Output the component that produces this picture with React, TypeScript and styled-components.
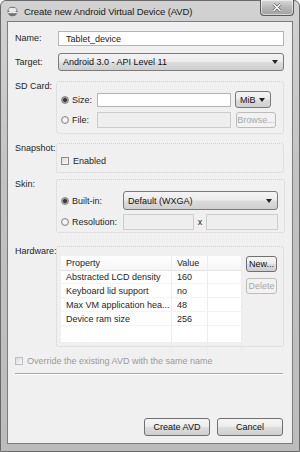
import React from 'react';
import styled, {createGlobalStyle} from 'styled-components';

const GlobalStyle = createGlobalStyle`
  html, body {
    margin: 0;
    padding: 0;
    background: #ffffff;
  }
  * {
    box-sizing: border-box;
  }
`;

const FONT = `"Liberation Sans", "DejaVu Sans", sans-serif`;

const HARDWARE_ROWS = [
  {property: 'Abstracted LCD density', value: '160'},
  {property: 'Keyboard lid support', value: 'no'},
  {property: 'Max VM application hea...', value: '48'},
  {property: 'Device ram size', value: '256'},
];

/* ---------- window frame ---------- */

const Window = styled.div`
  width: 300px;
  height: 452px;
  display: flex;
  flex-direction: column;
  padding: 0 6px 7px 6px;
  border: 1px solid #6a6a6a;
  border-radius: 6px 6px 0 0;
  background: linear-gradient(180deg, #d2d2d2 0%, #c2c2c2 40%, #bcbcbc 100%);
  font-family: ${FONT};
  font-size: 9px;
  color: #1e1e1e;
`;

const TitleBar = styled.div`
  height: 20px;
  display: flex;
  align-items: center;
  gap: 6px;
  padding-left: 0;
  position: relative;
`;

const TitleText = styled.span`
  font-size: 9.5px;
  color: #202020;
  letter-spacing: -0.1px;
`;

const CloseButton = styled.div`
  position: absolute;
  top: -1px;
  right: -1px;
  width: 34px;
  height: 16px;
  display: flex;
  align-items: center;
  justify-content: center;
  border: 1px solid #5a5a5a;
  border-top: none;
  border-radius: 0 0 4px 4px;
  background: linear-gradient(180deg, #d8d8d8 0%, #b4b4b4 55%, #a2a2a2 100%);
  box-shadow: inset 0 0 0 1px rgba(255, 255, 255, 0.55);
`;

const Client = styled.div`
  flex: 1;
  display: flex;
  flex-direction: column;
  border: 1px solid #7c7c7c;
  background: #f0f0f0;
  padding: 9px 8px 7px 7px;
`;

/* ---------- form ---------- */

const Row = styled.div<{$top?: number}>`
  display: grid;
  grid-template-columns: 43px 1fr;
  align-items: start;
  margin-top: ${p => p.$top ?? 0}px;
  padding-left: 0;
`;

const Label = styled.div<{$offset?: number}>`
  padding-left: 0;
  padding-top: ${p => p.$offset ?? 0}px;
  white-space: nowrap;
  color: #1e1e1e;
`;

const TextInput = styled.div<{$disabled?: boolean; $width?: number; $height?: number}>`
  width: ${p => (p.$width ? `${p.$width}px` : '100%')};
  height: ${p => p.$height ?? 15}px;
  display: flex;
  align-items: center;
  padding-left: 7px;
  border: 1px solid ${p => (p.$disabled ? '#cdcdcd' : '#b5b5b5')};
  background: ${p => (p.$disabled ? '#eeeeee' : '#ffffff')};
  color: #1a1a1a;
`;

const Combo = styled.div<{$width?: number; $height?: number}>`
  width: ${p => (p.$width ? `${p.$width}px` : '100%')};
  height: ${p => p.$height ?? 18}px;
  display: flex;
  align-items: center;
  justify-content: space-between;
  padding: 0 5px 0 4px;
  border: 1px solid #7a7a7a;
  border-radius: 3px;
  background: linear-gradient(180deg, #f4f4f4 0%, #ebebeb 48%, #dcdcdc 52%, #cfcfcf 100%);
  color: #111;
`;

const Arrow = styled.span`
  width: 0;
  height: 0;
  border-left: 3px solid transparent;
  border-right: 3px solid transparent;
  border-top: 4px solid #222;
`;

const Group = styled.div<{$height: number}>`
  height: ${p => p.$height}px;
  margin-left: -2px;
  border: 1px dotted #cfcfcf;
  border-radius: 3px;
  padding: 0 6px 0 4px;
  display: flex;
  flex-direction: column;
`;

const GroupLine = styled.div<{$top?: number}>`
  display: flex;
  align-items: center;
  margin-top: ${p => p.$top ?? 0}px;
`;

const Radio = styled.span<{$checked?: boolean}>`
  width: 8px;
  height: 8px;
  flex: none;
  border-radius: 50%;
  border: 1px solid #8a8a8a;
  background: radial-gradient(circle, ${p => (p.$checked ? '#3a3a3a 0 1.6px, #9a9a9a 2.2px' : '#f4f4f4 0 2px, #dadada 3px')});
  margin-right: 3px;
`;

const Check = styled.span<{$disabled?: boolean}>`
  width: 8px;
  height: 8px;
  flex: none;
  border: 1px solid ${p => (p.$disabled ? '#bdbdbd' : '#8c8c8c')};
  background: linear-gradient(135deg, #dcdcdc, #f8f8f8);
  margin-right: 4px;
`;

const OptionLabel = styled.span<{$width: number}>`
  width: ${p => p.$width}px;
  flex: none;
  white-space: nowrap;
`;

const Button = styled.div<{$width: number; $height?: number; $disabled?: boolean}>`
  width: ${p => p.$width}px;
  height: ${p => p.$height ?? 16}px;
  flex: none;
  display: flex;
  align-items: center;
  justify-content: center;
  border: 1px solid ${p => (p.$disabled ? '#bcbcbc' : '#707070')};
  border-radius: 3px;
  background: ${p =>
    p.$disabled
      ? '#f2f2f2'
      : 'linear-gradient(180deg, #f6f6f6 0%, #ebebeb 48%, #dddddd 52%, #cfcfcf 100%)'};
  color: ${p => (p.$disabled ? '#a8a8a8' : '#111')};
  white-space: nowrap;
`;

/* ---------- hardware table ---------- */

const HardwareBody = styled.div`
  display: flex;
  gap: 4px;
  margin-top: 9px;
`;

const Table = styled.div`
  width: 181px;
  height: 86px;
  background: #ffffff;
  display: grid;
  grid-template-columns: 111px 36px 1fr;
  grid-auto-rows: 14px;
  align-content: start;
  position: relative;
`;

const Cell = styled.div<{$header?: boolean}>`
  display: flex;
  align-items: center;
  padding-left: 5px;
  white-space: nowrap;
  overflow: hidden;
  border-right: 1px solid #ececec;
  border-bottom: 1px solid ${p => (p.$header ? '#e4e4e4' : '#f4f4f4')};
  height: ${p => (p.$header ? 15 : 14)}px;
  background: ${p => (p.$header ? 'linear-gradient(180deg, #ffffff, #f5f5f5)' : 'transparent')};
`;

const ColumnFill = styled.div`
  grid-column: 1 / -1;
  height: 29px;
  display: grid;
  grid-template-columns: 111px 36px 1fr;
`;

const FillCell = styled.div`
  border-right: 1px solid #ececec;
`;

const SideButtons = styled.div`
  display: flex;
  flex-direction: column;
  gap: 6px;
`;

/* ---------- footer ---------- */

const Override = styled.div`
  display: flex;
  align-items: center;
  margin-top: 9px;
  color: #9a9a9a;
`;

const Separator = styled.div`
  height: 2px;
  margin-top: 7px;
  margin-right: 1px;
  border-top: 1px solid #a8a8a8;
  border-bottom: 1px solid #ffffff;
`;

const Footer = styled.div`
  margin-top: auto;
  display: flex;
  justify-content: flex-end;
  gap: 7px;
  padding-right: 1px;
`;

const AppIcon = () => (
  <svg width="11" height="11" viewBox="0 0 11 11">
    <ellipse cx="5.5" cy="5.5" rx="5" ry="4.8" fill="#707070" />
    <ellipse cx="5.5" cy="4" rx="4" ry="2.2" fill="#e8e8e8" />
    <rect x="1" y="6" width="9" height="1.2" fill="#e8e8e8" />
  </svg>
);

const CloseGlyph = () => (
  <svg width="10" height="9" viewBox="0 0 10 9">
    <path d="M1.5 1 L8.5 8 M8.5 1 L1.5 8" stroke="#5a5a5a" strokeWidth="2.6" />
    <path d="M1.5 1 L8.5 8 M8.5 1 L1.5 8" stroke="#ffffff" strokeWidth="1.5" />
  </svg>
);

export default function App() {
  return (
    <>
      <GlobalStyle />
      <Window>
        <TitleBar>
          <AppIcon />
          <TitleText>Create new Android Virtual Device (AVD)</TitleText>
          <CloseButton>
            <CloseGlyph />
          </CloseButton>
        </TitleBar>

        <Client>
          <Row>
            <Label $offset={2}>Name:</Label>
            <TextInput>Tablet_device</TextInput>
          </Row>

          <Row $top={7}>
            <Label $offset={4}>Target:</Label>
            <Combo>
              <span>Android 3.0 - API Level 11</span>
              <Arrow />
            </Combo>
          </Row>

          <Row $top={10}>
            <Label>SD Card:</Label>
            <Group $height={53}>
              <GroupLine $top={9}>
                <Radio $checked />
                <OptionLabel $width={25}>Size:</OptionLabel>
                <TextInput $width={134} $height={14} />
                <Combo $width={36} $height={17} style={{marginLeft: 4}}>
                  <span>MiB</span>
                  <Arrow />
                </Combo>
              </GroupLine>
              <GroupLine $top={4}>
                <Radio />
                <OptionLabel $width={25}>File:</OptionLabel>
                <TextInput $width={134} $height={16} $disabled />
                <Button $width={40} $disabled style={{marginLeft: 5}}>
                  Browse...
                </Button>
              </GroupLine>
            </Group>
          </Row>

          <Row $top={9}>
            <Label>Snapshot:</Label>
            <Group $height={30}>
              <GroupLine $top={12}>
                <Check />
                <span>Enabled</span>
              </GroupLine>
            </Group>
          </Row>

          <Row $top={6}>
            <Label>Skin:</Label>
            <Group $height={54}>
              <GroupLine $top={11}>
                <Radio $checked />
                <OptionLabel $width={51}>Built-in:</OptionLabel>
                <Combo $width={155} $height={19}>
                  <span>Default (WXGA)</span>
                  <Arrow />
                </Combo>
              </GroupLine>
              <GroupLine $top={4}>
                <Radio />
                <OptionLabel $width={51}>Resolution:</OptionLabel>
                <TextInput $width={71} $height={16} $disabled />
                <OptionLabel $width={12} style={{textAlign: 'center'}}>
                  x
                </OptionLabel>
                <TextInput $width={72} $height={16} $disabled />
              </GroupLine>
            </Group>
          </Row>

          <Row $top={13}>
            <Label>Hardware:</Label>
            <Group $height={101}>
              <HardwareBody>
                <Table>
                  <Cell $header>Property</Cell>
                  <Cell $header>Value</Cell>
                  <Cell $header />
                  {HARDWARE_ROWS.map(row => (
                    <React.Fragment key={row.property}>
                      <Cell>{row.property}</Cell>
                      <Cell>{row.value}</Cell>
                      <Cell />
                    </React.Fragment>
                  ))}
                  <ColumnFill>
                    <FillCell />
                    <FillCell />
                    <FillCell />
                  </ColumnFill>
                </Table>
                <SideButtons>
                  <Button $width={31} $height={16}>
                    New...
                  </Button>
                  <Button $width={31} $height={16} $disabled>
                    Delete
                  </Button>
                </SideButtons>
              </HardwareBody>
            </Group>
          </Row>

          <Override>
            <Check $disabled />
            <span>Override the existing AVD with the same name</span>
          </Override>

          <Separator />

          <Footer>
            <Button $width={66} $height={18}>
              Create AVD
            </Button>
            <Button $width={66} $height={18}>
              Cancel
            </Button>
          </Footer>
        </Client>
      </Window>
    </>
  );
}
